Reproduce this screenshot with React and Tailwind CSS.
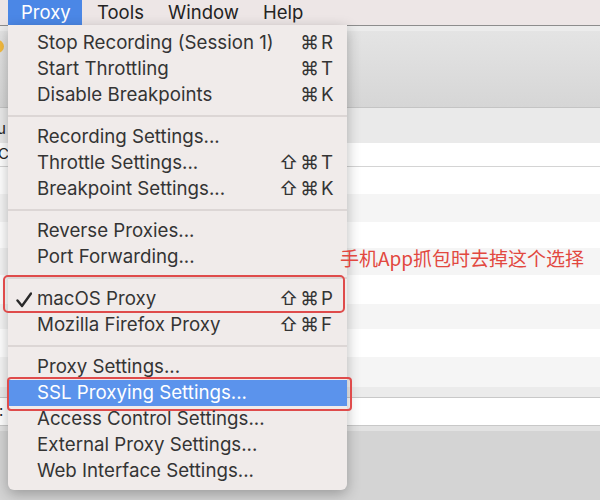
import React from 'react'

const sections = [
  [
    { label: 'Stop Recording (Session 1)', k: 'R' },
    { label: 'Start Throttling', k: 'T' },
    { label: 'Disable Breakpoints', k: 'K' }
  ],
  [
    { label: 'Recording Settings...' },
    { label: 'Throttle Settings...', shift: true, k: 'T' },
    { label: 'Breakpoint Settings...', shift: true, k: 'K' }
  ],
  [
    { label: 'Reverse Proxies...' },
    { label: 'Port Forwarding...' }
  ],
  [
    { label: 'macOS Proxy', shift: true, k: 'P', checked: true, boxed: 'mac' },
    { label: 'Mozilla Firefox Proxy', shift: true, k: 'F' }
  ],
  [
    { label: 'Proxy Settings...' },
    { label: 'SSL Proxying Settings...', active: true, boxed: 'ssl' },
    { label: 'Access Control Settings...' },
    { label: 'External Proxy Settings...' },
    { label: 'Web Interface Settings...' }
  ]
]

const stripes = [
  { h: 'h-[27px]', bg: 'bg-white' },
  { h: 'h-[28px]', bg: 'bg-[#f5f5f5]' },
  { h: 'h-[26px]', bg: 'bg-white' },
  { h: 'h-[27px]', bg: 'bg-[#f5f5f5]' },
  { h: 'h-[29px]', bg: 'bg-white' },
  { h: 'h-[25px]', bg: 'bg-[#f5f5f5]' },
  { h: 'h-[28px]', bg: 'bg-white' },
  { h: 'h-[30px]', bg: 'bg-[#f5f5f5]' }
]

const Check = () => (
  <svg width="16" height="16" viewBox="0 0 16 16" className="mt-[1px]">
    <path d="M1.5 8.5 L6 14 L15 1.5" fill="none" stroke="#2a2a2a" strokeWidth="2.4" strokeLinecap="round" strokeLinejoin="round" />
  </svg>
)

const MenuRow = ({ item }) => (
  <div
    className={`relative flex h-[26px] items-center pl-[8px] pr-[13px] ${
      item.active ? 'bg-[#5b93ec] text-white' : 'text-[#343434]'
    }`}
  >
    <span className="flex w-[21px] items-center">{item.checked && <Check />}</span>
    <span>{item.label}</span>
    {item.k && (
      <span className="ml-auto flex">
        {item.shift && <span className="mr-[2px]">⇧</span>}
        <span>⌘</span>
        <span className="w-[15px] pl-[2px]">{item.k}</span>
      </span>
    )}
    {item.boxed === 'mac' && (
      <span className="pointer-events-none absolute -left-[5px] -top-[11px] right-[2px] -bottom-[1px] rounded-[5px] border-[2.5px] border-[#df4b4b]" />
    )}
    {item.boxed === 'ssl' && (
      <span className="pointer-events-none absolute -left-[1px] -top-[3px] -right-[5px] -bottom-[5px] rounded-[4px] border-[2px] border-[#df4b4b]" />
    )}
  </div>
)

const App = () => {
  return (
    <div className="relative h-[500px] w-[600px] overflow-hidden bg-[#d4d4d4] font-['Inter','DejaVu_Sans',sans-serif]">
      {/* menu bar */}
      <div className="flex h-[25px] items-center bg-[#ede6e6] text-[18.5px] leading-none text-[#232323]">
        <span className="ml-[8px] flex h-[25px] w-[74px] items-center bg-[#4b87e6] pl-[13px] text-white">Proxy</span>
        <span className="w-[71px] pl-[15px]">Tools</span>
        <span className="w-[95px] pl-[15px]">Window</span>
        <span className="pl-[15px]">Help</span>
      </div>

      {/* window behind the menu */}
      <div className="flex flex-col">
        <div className="h-[1px] bg-[#8d8d8d]" />
        <div className="h-[5px] bg-[#ececec]" />
        <div className="flex h-[76px] bg-gradient-to-b from-[#e4e4e4] to-[#d6d6d6]">
          <div className="-ml-[9px] mt-[9px] h-[13px] w-[13px] rounded-full bg-[#f4bb3f]" />
        </div>
        <div className="h-[1px] bg-[#c4c4c4]" />
        <div className="flex h-[35px] items-center bg-[#eaeaea] text-[15px] text-[#222]">
          <span className="-ml-[3px] mt-[8px]">u</span>
        </div>
        <div className="flex h-[23px] items-center bg-white text-[15px] text-[#222]">
          <span className="-ml-[2px]">Co</span>
        </div>
        <div className="h-[1px] bg-[#d4d4d4]" />
        {stripes.map((s, i) => (
          <div key={i} className={`${s.h} ${s.bg}`} />
        ))}
        <div className="h-[10px] bg-[#ebebeb]" />
        <div className="h-[1px] bg-[#c8c8c8]" />
        <div className="flex h-[27px] items-center bg-white text-[15px] text-[#222]">
          <span className="-ml-[1px]">:</span>
        </div>
        <div className="h-[1px] bg-[#c8c8c8]" />
        <div className="h-[5px] bg-[#e2e2e2]" />
      </div>

      {/* dropdown menu */}
      <div className="absolute left-[8px] top-[25px] w-[339px] rounded-b-[6px] bg-[#f0ebea] pb-[6px] pt-[5px] text-[18.7px] leading-none shadow-[0_4px_14px_rgba(0,0,0,0.28)]">
        {sections.map((sec, si) => (
          <div key={si}>
            {si > 0 && <div className="my-[7px] h-[2px] bg-[#dcd6d5]" />}
            {sec.map((item) => (
              <MenuRow key={item.label} item={item} />
            ))}
          </div>
        ))}
      </div>

      {/* annotation */}
      <div className="absolute left-[340px] top-[247px] text-[19px] leading-[22px] text-[#e2483f] font-['Noto_Sans_CJK_SC',sans-serif]">
        手机App抓包时去掉这个选择
      </div>
    </div>
  )
}

export default App
